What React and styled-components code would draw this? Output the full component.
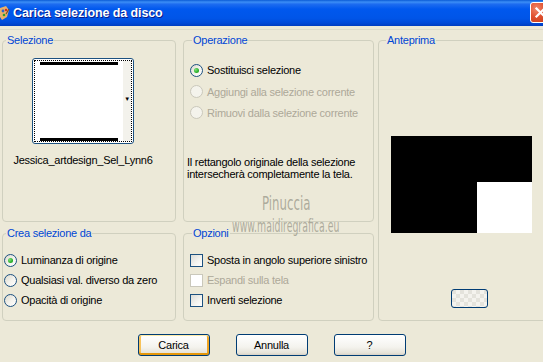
import React from "react";
import styled, { createGlobalStyle } from "styled-components";

const GlobalStyle = createGlobalStyle`
  html, body {
    margin: 0;
    padding: 0;
    background: #ece9d8;
    overflow: hidden;
  }
  body {
    font-family: "Liberation Sans", Arial, sans-serif;
    font-size: 11px;
    letter-spacing: -0.25px;
    color: #000;
  }
`;

const Dialog = styled.div`
  position: relative;
  width: 543px;
  height: 362px;
  overflow: hidden;
  background: #ece9d8;
`;

const TitleBar = styled.div`
  height: 26px;
  display: flex;
  align-items: center;
  overflow: hidden;
  background: linear-gradient(
    to bottom,
    #0a5bd6 0%,
    #3c8ef6 8%,
    #1d6cf0 16%,
    #0058ee 35%,
    #0055e8 70%,
    #004ad8 88%,
    #003dc0 100%
  );
`;

const TitleIcon = styled.svg`
  width: 10px;
  height: 16px;
  flex: none;
`;

const TitleText = styled.div`
  margin-left: 3px;
  color: #fff;
  font-family: "Liberation Sans", Arial, sans-serif;
  font-weight: bold;
  font-size: 12.5px;
  letter-spacing: -0.1px;
  text-shadow: 1px 1px 0 #0a1b8a;
  flex: 1;
`;

const CloseButton = styled.div`
  width: 21px;
  height: 21px;
  margin-right: -8px;
  margin-top: -1px;
  box-sizing: border-box;
  border: 1px solid #fff;
  border-radius: 3px;
  background: radial-gradient(circle at 30% 30%, #f0876a 0%, #e0512f 45%, #c23a16 100%);
  display: flex;
  align-items: center;
  justify-content: center;
  flex: none;
`;

const Client = styled.div`
  margin-top: 3px;
  border-top: 1px solid #dedbc9;
  padding-left: 2px;
`;

const Groups = styled.div`
  margin-top: 4px;
  display: grid;
  grid-template-columns: 177px 191px 180px;
  grid-template-rows: 188px 94px;
  column-gap: 4px;
  row-gap: 5px;
`;

const Group = styled.fieldset`
  margin: 0;
  padding: 0;
  min-width: 0;
  box-sizing: border-box;
  width: ${(p) => p.$w || "auto"};
  border: 1px solid #d0d0bf;
  border-radius: 4px;
  grid-column: ${(p) => p.$col};
  grid-row: ${(p) => p.$row};
`;

const Legend = styled.legend`
  margin-left: ${(p) => p.$indent}px;
  padding: 0 1px;
  color: #0046d5;
  font-size: 11px;
  line-height: 13px;
`;

const GroupBody = styled.div`
  display: flex;
  flex-direction: column;
  padding: ${(p) => p.$pad};
  align-items: ${(p) => p.$align || "stretch"};
  width: ${(p) => p.$w || "auto"};
`;

const ThumbFrame = styled.div`
  width: 102px;
  height: 86px;
  box-sizing: border-box;
  border: 1px solid #1c5180;
  border-radius: 3px;
  padding: 1px;
  background: #fff;
`;

const ThumbInner = styled.div`
  height: 100%;
  box-sizing: border-box;
  border: 1px dotted #000;
  display: grid;
  grid-template-columns: 1fr 8px;
`;

const ThumbImage = styled.div`
  display: flex;
  flex-direction: column;
  justify-content: space-between;
  padding: 1px 5px 0;
`;

const ThumbBar = styled.div`
  height: 3px;
  background: #000;
`;

const ThumbStrip = styled.div`
  background: #f3f2ec;
  display: flex;
  align-items: center;
  justify-content: center;
  padding-bottom: 4px;
  font-size: 6px;
  line-height: 6px;
`;

const ThumbLabel = styled.div`
  margin-top: 10px;
  line-height: 13px;
  white-space: nowrap;
`;

const OptionRow = styled.div`
  height: ${(p) => p.$h || 21}px;
  display: flex;
  align-items: center;
  gap: 4px;
  white-space: nowrap;
  color: ${(p) => (p.$disabled ? "#aca899" : "#000")};
`;

const Radio = styled.span`
  width: 13px;
  height: 13px;
  box-sizing: border-box;
  border-radius: 50%;
  flex: none;
  border: 1px solid ${(p) => (p.$disabled ? "#cac8bb" : "#1c5180")};
  background: ${(p) =>
    p.$disabled
      ? "#f4f3ec"
      : "linear-gradient(135deg, #dcd9cd 0%, #f4f3ee 55%, #ffffff 100%)"};
  display: flex;
  align-items: center;
  justify-content: center;
  &::after {
    content: "";
    display: ${(p) => (p.$checked ? "block" : "none")};
    width: 5px;
    height: 5px;
    border-radius: 50%;
    background: radial-gradient(circle at 35% 35%, #7ee27a 0%, #2bb02b 60%, #1a8c1a 100%);
  }
`;

const Check = styled.span`
  width: 13px;
  height: 13px;
  box-sizing: border-box;
  flex: none;
  border: 1px solid ${(p) => (p.$disabled ? "#cac8bb" : "#1c5180")};
  background: ${(p) =>
    p.$disabled ? "#fff" : "linear-gradient(135deg, #dcdcd7 0%, #f4f4f0 60%, #ffffff 100%)"};
`;

const Note = styled.div`
  margin-top: 33px;
  margin-left: -3px;
  line-height: 12px;
  white-space: nowrap;
`;

const Preview = styled.div`
  margin-left: 12px;
  width: 141px;
  height: 97px;
  background: #000;
  display: flex;
  align-items: flex-end;
  justify-content: flex-end;
`;

const PreviewWhite = styled.div`
  width: 55px;
  height: 51px;
  background: #fff;
`;

const SmallButton = styled.div`
  margin-top: 56px;
  margin-left: 72px;
  width: 37px;
  height: 19px;
  box-sizing: border-box;
  border: 1px solid #003c74;
  border-radius: 3px;
  background-color: #f4f3ee;
  background-image: linear-gradient(45deg, #e4e3dc 25%, transparent 25%, transparent 75%, #e4e3dc 75%),
    linear-gradient(45deg, #e4e3dc 25%, transparent 25%, transparent 75%, #e4e3dc 75%);
  background-size: 8px 8px;
  background-position: 8px 4px, 12px 8px;
`;

const ButtonRow = styled.div`
  margin-top: 13px;
  display: flex;
  justify-content: center;
  gap: 26px;
  padding-right: 2px;
`;

const Button = styled.div`
  width: 72px;
  height: 22px;
  box-sizing: border-box;
  border: 1px solid #003c74;
  border-radius: 3px;
  display: flex;
  align-items: center;
  justify-content: center;
  background: linear-gradient(to bottom, #ffffff 0%, #f4f3ee 60%, #e6e3d8 90%, #d6d0c5 100%);
  box-shadow: ${(p) =>
    p.$default ? "inset 0 1px 0 #fde9a6, inset 0 -2px 0 #e5970a, inset 2px 0 0 #f7c25a, inset -2px 0 0 #f0a624" : "none"};
`;

const Watermark = styled.div`
  position: absolute;
  left: ${(p) => p.$x}px;
  top: ${(p) => p.$y}px;
  font-family: "DejaVu Sans", sans-serif;
  font-size: ${(p) => p.$size}px;
  letter-spacing: 0;
  line-height: 1;
  color: rgba(110, 108, 95, 0.5);
  transform: scaleX(${(p) => p.$sx});
  transform-origin: left top;
  white-space: nowrap;
  pointer-events: none;
`;

export default function App() {
  return (
    <Dialog>
      <GlobalStyle />
      <TitleBar>
        <TitleIcon viewBox="0 0 10 16">
          <path d="M0 3 L6 1 L9 5 L7 12 L2 15 L0 12 Z" fill="#e9b06a" />
          <circle cx="3" cy="6" r="1.4" fill="#2c64c8" />
          <circle cx="6" cy="5" r="1.2" fill="#d82a1e" />
          <circle cx="4" cy="10" r="1.3" fill="#2f9a2f" />
          <path d="M6 9 L9 4" stroke="#7b4a1e" strokeWidth="1.2" />
        </TitleIcon>
        <TitleText>Carica selezione da disco</TitleText>
        <CloseButton>
          <svg width="13" height="13" viewBox="0 0 13 13">
            <path d="M2.5 2.5 L10.5 10.5 M10.5 2.5 L2.5 10.5" stroke="#fff" strokeWidth="2.2" strokeLinecap="square" />
          </svg>
        </CloseButton>
      </TitleBar>
      <Client>
        <Groups>
          <Group $w="174px" $col="1" $row="1">
            <Legend $indent={3}>Selezione</Legend>
            <GroupBody $pad="11px 0 0 0" $align="center" $w="160px">
              <ThumbFrame>
                <ThumbInner>
                  <ThumbImage>
                    <ThumbBar />
                    <ThumbBar />
                  </ThumbImage>
                  <ThumbStrip>▼</ThumbStrip>
                </ThumbInner>
              </ThumbFrame>
              <ThumbLabel>Jessica_artdesign_Sel_Lynn6</ThumbLabel>
            </GroupBody>
          </Group>

          <Group $col="2" $row="1">
            <Legend $indent={8}>Operazione</Legend>
            <GroupBody $pad="12px 0 0 6px">
              <OptionRow $h={22}>
                <Radio $checked />
                Sostituisci selezione
              </OptionRow>
              <OptionRow $disabled>
                <Radio $disabled />
                Aggiungi alla selezione corrente
              </OptionRow>
              <OptionRow $disabled>
                <Radio $disabled />
                Rimuovi dalla selezione corrente
              </OptionRow>
              <Note>
                Il rettangolo originale della selezione
                <br />
                intersecherà completamente la tela.
              </Note>
            </GroupBody>
          </Group>

          <Group $col="3" $row="1 / 3">
            <Legend $indent={7}>Anteprima</Legend>
            <GroupBody $pad="89px 0 0 0">
              <Preview>
                <PreviewWhite />
              </Preview>
              <SmallButton />
            </GroupBody>
          </Group>

          <Group $w="174px" $col="1" $row="2">
            <Legend $indent={3}>Crea selezione da</Legend>
            <GroupBody $pad="10px 0 0 1px">
              <OptionRow $h={20}>
                <Radio $checked />
                Luminanza di origine
              </OptionRow>
              <OptionRow $h={20}>
                <Radio />
                Qualsiasi val. diverso da zero
              </OptionRow>
              <OptionRow $h={20}>
                <Radio />
                Opacità di origine
              </OptionRow>
            </GroupBody>
          </Group>

          <Group $col="2" $row="2">
            <Legend $indent={8}>Opzioni</Legend>
            <GroupBody $pad="10px 0 0 6px">
              <OptionRow $h={20}>
                <Check />
                Sposta in angolo superiore sinistro
              </OptionRow>
              <OptionRow $h={20} $disabled>
                <Check $disabled />
                Espandi sulla tela
              </OptionRow>
              <OptionRow $h={20}>
                <Check />
                Inverti selezione
              </OptionRow>
            </GroupBody>
          </Group>
        </Groups>

        <ButtonRow>
          <Button $default>Carica</Button>
          <Button>Annulla</Button>
          <Button>?</Button>
        </ButtonRow>
      </Client>

      <Watermark $x={262} $y={194} $size={19} $sx={0.62}>
        Pinuccia
      </Watermark>
      <Watermark $x={232} $y={218} $size={17} $sx={0.55}>
        www.maidiregrafica.eu
      </Watermark>
    </Dialog>
  );
}
